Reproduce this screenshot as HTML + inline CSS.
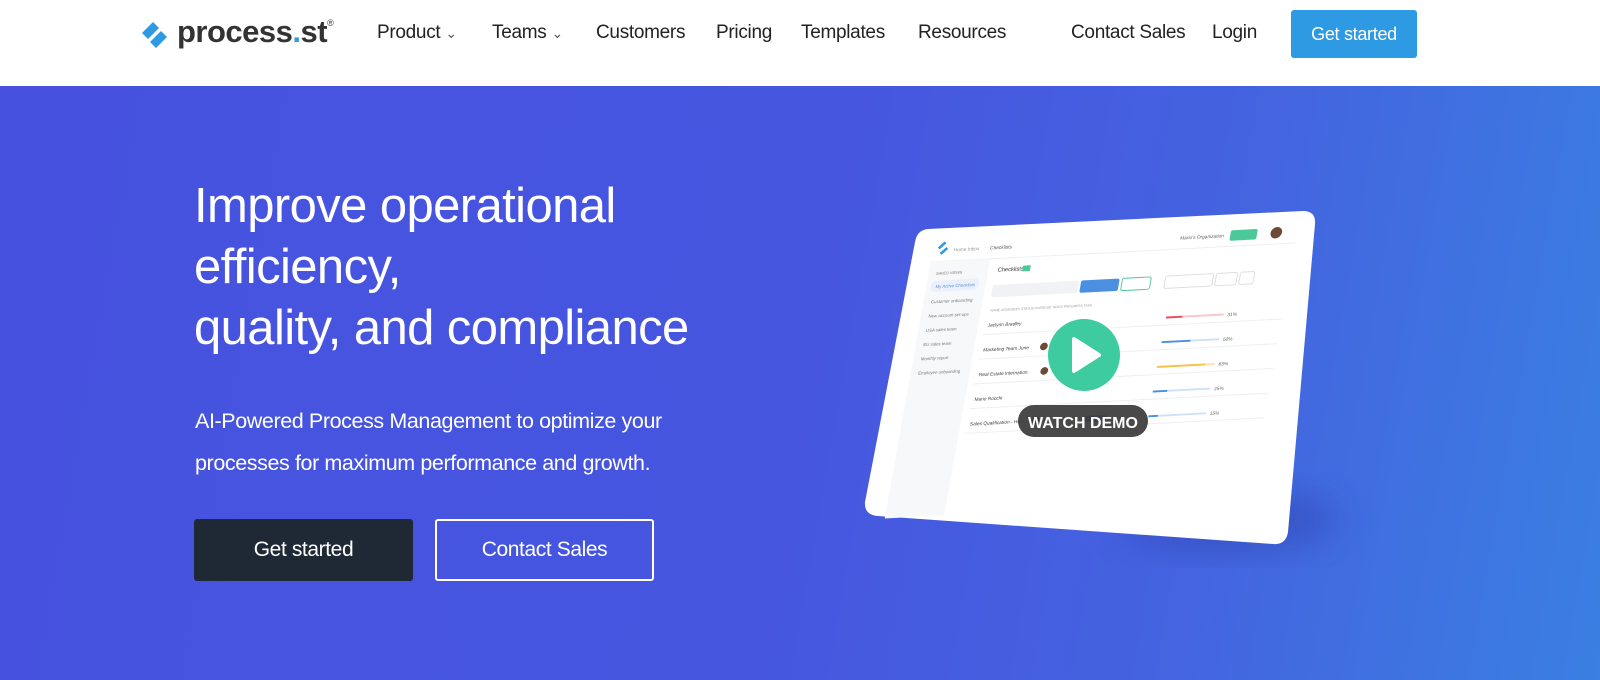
<!DOCTYPE html>
<html><head><meta charset="utf-8">
<style>
*{margin:0;padding:0;box-sizing:border-box}
body{width:1600px;height:680px;overflow:hidden;font-family:"Liberation Sans",sans-serif;background:#fff;position:relative}
.nav{position:absolute;top:0;left:0;width:1600px;height:86px;background:#fff}
.nav a{position:absolute;top:22px;font-size:19px;color:#222;text-decoration:none;letter-spacing:-0.3px}
.logo{position:absolute;left:138px;top:14px;font-size:31px;font-weight:bold;color:#333;letter-spacing:-0.5px}
.hero{position:absolute;top:86px;left:0;width:1600px;height:594px;background:linear-gradient(100deg,#4652df 0%,#4656df 50%,#4464e0 75%,#3a7fe2 100%)}
h1{position:absolute;left:194px;top:176px;color:#fff;font-weight:normal;font-size:49px;line-height:61px;letter-spacing:-0.6px}
.sub{position:absolute;left:195px;top:400px;color:#fff;font-size:21.5px;line-height:42px;letter-spacing:-0.4px}
.btn{position:absolute;top:519px;height:62px;width:219px;border-radius:3px;color:#fff;font-size:21px;text-align:center;line-height:62px;letter-spacing:-0.4px}
</style></head><body>
<div class="nav">
  <svg style="position:absolute;left:139px;top:20px" width="34" height="30" viewBox="0 0 34 30">
    <path d="M3 13 L14 2 L20 8 L9 19 Z" fill="#2d9ae3"/>
    <path d="M11 22 L22 11 L28 17 L17 28 Z" fill="#2d9ae3"/>
  </svg>
  <div class="logo" style="left:177px">process<span style="color:#2d9ae3">.</span>st<sup style="font-size:9px;font-weight:normal;vertical-align:top;position:relative;top:4px">®</sup></div>
  <a style="left:377px">Product <span style="font-size:14px;color:#555">&#8964;</span></a>
  <a style="left:492px">Teams <span style="font-size:14px;color:#555">&#8964;</span></a>
  <a style="left:596px">Customers</a>
  <a style="left:716px">Pricing</a>
  <a style="left:801px">Templates</a>
  <a style="left:918px">Resources</a>
  <a style="left:1071px">Contact Sales</a>
  <a style="left:1212px">Login</a>
  <div style="position:absolute;left:1291px;top:10px;width:126px;height:48px;background:#2d9ae3;border-radius:3px;color:#fff;font-size:18px;text-align:center;line-height:48px;letter-spacing:-0.3px">Get started</div>
</div>
<div class="hero"></div>
<h1>Improve operational<br>efficiency,<br>quality, and compliance</h1>
<div class="sub">AI-Powered Process Management to optimize your<br>processes for maximum performance and growth.</div>
<div class="btn" style="left:194px;background:#1f2935">Get started</div>
<div class="btn" style="left:435px;border:2px solid #fff;line-height:58px">Contact Sales</div>

<svg style="position:absolute;left:0;top:0" width="1600" height="680">
  <defs>
    <filter id="sh" x="-30%" y="-30%" width="160%" height="160%"><feGaussianBlur stdDeviation="18"/></filter>
  </defs>
  <ellipse cx="1230" cy="520" rx="110" ry="30" fill="#2a3aa8" opacity="0.45" filter="url(#sh)"/>
  <path d="M928 229 L1303 211 Q1316 211 1315 224 L1288 532 Q1286 545 1273 544 L878 516 Q864 515 865 502 L915 242 Q917 230 928 229 Z" fill="#fff"/>
  <g transform="matrix(0.96,-0.05,-0.17,0.95,934,243)">
    <line x1="0" y1="20" x2="380" y2="20" stroke="#eceef2"/>
    <rect x="0" y="20" width="62" height="270" fill="#f7f8fa"/>
    <path d="M6 6 L12 0 M9 12 L15 6" stroke="#2d9ae3" stroke-width="3"/>
    <text x="22" y="10" font-size="5" fill="#999">Home  Inbox</text>
    <text x="60" y="10" font-size="5" fill="#555">Checklists</text>
    <text x="258" y="10" font-size="5" fill="#666">Mario's Organization</text>
    <rect x="310" y="3" width="28" height="11" rx="2" fill="#4cc99a"/>
    <circle cx="358" cy="8" r="6" fill="#6b4a36"/>
    <text x="8" y="34" font-size="4" fill="#777">SAVED VIEWS</text>
    <rect x="5" y="40" width="50" height="12" rx="5" fill="#eaf1fc"/>
    <text x="10" y="48" font-size="4.5" fill="#5b8fe0">My Active Checklists</text>
    <text x="8" y="64" font-size="4.5" fill="#777">Customer onboarding</text>
    <text x="8" y="79" font-size="4.5" fill="#777">New account set-ups</text>
    <text x="8" y="94" font-size="4.5" fill="#777">USA sales team</text>
    <text x="8" y="109" font-size="4.5" fill="#777">EU sales team</text>
    <text x="8" y="124" font-size="4.5" fill="#777">Monthly report</text>
    <text x="8" y="139" font-size="4.5" fill="#777">Employee onboarding</text>
    <text x="72" y="34" font-size="6" fill="#333">Checklists</text>
    <rect x="98" y="29" width="8" height="6" fill="#4cc99a"/>
    <rect x="70" y="48" width="90" height="13" rx="2" fill="#f1f2f5"/>
    <rect x="162" y="48" width="40" height="13" rx="2" fill="#4a8fe0"/>
    <rect x="205" y="48" width="30" height="13" rx="2" fill="#fff" stroke="#4cc99a"/>
    <rect x="250" y="48" width="50" height="13" rx="2" fill="#fff" stroke="#ddd"/>
    <rect x="303" y="48" width="22" height="13" rx="2" fill="#fff" stroke="#ddd"/>
    <rect x="328" y="48" width="15" height="13" rx="2" fill="#fff" stroke="#ddd"/>
    <text x="72" y="76" font-size="3.5" fill="#999">NAME   ASSIGNEES   STATUS   OVERDUE TASKS   PROGRESS   TASK</text>
    <g font-size="5" fill="#444">
      <text x="72" y="92">Jaclynn Bradley</text>
      <text x="72" y="118">Marketing Team June</text>
      <text x="72" y="144">Real Estate Internation.</text>
      <text x="72" y="170">Mario Rocchi</text>
      <text x="72" y="196">Sales Qualification - HCA</text>
    </g>
    <g stroke="#eceef2"><line x1="68" y1="100" x2="380" y2="100"/><line x1="68" y1="126" x2="380" y2="126"/><line x1="68" y1="152" x2="380" y2="152"/><line x1="68" y1="178" x2="380" y2="178"/><line x1="68" y1="204" x2="380" y2="204"/></g>
    <g stroke-width="2"><line x1="258" y1="92" x2="318" y2="92" stroke="#f7c7cc"/><line x1="258" y1="92" x2="275" y2="92" stroke="#ef4d5f"/>
    <line x1="258" y1="118" x2="318" y2="118" stroke="#cfe0f7"/><line x1="258" y1="118" x2="288" y2="118" stroke="#4a8fe0"/>
    <line x1="258" y1="144" x2="318" y2="144" stroke="#fbe3b0"/><line x1="258" y1="144" x2="308" y2="144" stroke="#f6c244"/>
    <line x1="258" y1="170" x2="318" y2="170" stroke="#cfe0f7"/><line x1="258" y1="170" x2="273" y2="170" stroke="#4a8fe0"/>
    <line x1="258" y1="196" x2="318" y2="196" stroke="#cfe0f7"/><line x1="258" y1="196" x2="268" y2="196" stroke="#4a8fe0"/></g>
    <g font-size="5" fill="#666"><text x="322" y="94">31%</text><text x="322" y="120">50%</text><text x="322" y="146">83%</text><text x="322" y="172">25%</text><text x="322" y="198">15%</text></g>
    <rect x="190" y="140" width="24" height="7" rx="3.5" fill="#f6c244"/>
    <rect x="190" y="192" width="24" height="7" rx="3.5" fill="#4a8fe0"/>
    <circle cx="135" cy="116" r="4" fill="#6b4a36"/><circle cx="140" cy="142" r="4" fill="#6b4a36"/><circle cx="140" cy="194" r="4" fill="#3a2a20"/>
  </g>
  <circle cx="1084" cy="355" r="36" fill="#3ecb9f"/>
  <path d="M1074 339 L1099 355 L1074 371 Z" fill="#fff" stroke="#fff" stroke-width="4" stroke-linejoin="round"/>
  <rect x="1018" y="405" width="130" height="32" rx="16" fill="#3a3a3a" opacity="0.92"/>
  <text x="1083" y="428" font-size="16" font-weight="bold" fill="#fff" text-anchor="middle" font-family="Liberation Sans">WATCH DEMO</text>
</svg>
</body></html>
